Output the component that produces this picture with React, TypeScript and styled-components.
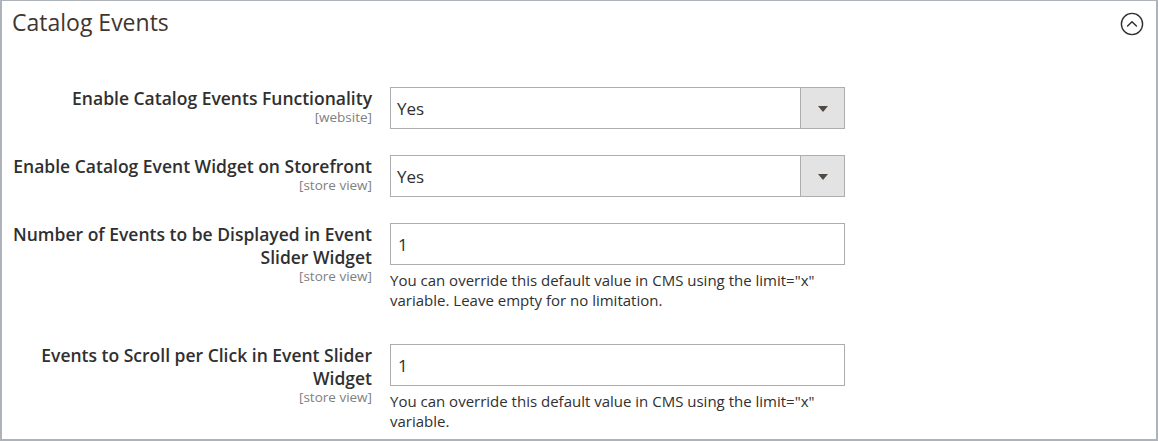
import React from 'react'
import styled, { createGlobalStyle } from 'styled-components'

const GlobalStyle = createGlobalStyle`
  html, body {
    margin: 0;
    padding: 0;
    background: #ffffff;
  }
  body {
    font-family: "Open Sans", "Noto Sans", Arial, sans-serif;
    color: #303030;
  }
`

const Section = styled.section`
  box-sizing: border-box;
  width: 1158px;
  height: 441px;
  overflow: hidden;
  border-top: 1px solid #adb3b8;
  border-right: 2px solid #adb3b8;
  border-bottom: 2px solid #adb3b8;
  border-left: 2px solid #adb3b8;
  background: #ffffff;
`

const Header = styled.div`
  display: flex;
  align-items: flex-start;
  justify-content: space-between;
  padding: 6px 12px 0 10px;
`

const Title = styled.h2`
  margin: 0;
  font-size: 23px;
  line-height: 30px;
  font-weight: 400;
  color: #41362f;
`

const Toggle = styled.button`
  display: flex;
  padding: 0;
  border: 0;
  background: transparent;
  margin-top: 5px;
  cursor: pointer;
`

const Fields = styled.div`
  display: flex;
  flex-direction: column;
  padding: 50px 0 0 10px;
`

const Row = styled.div<{ $spacing: number }>`
  display: grid;
  grid-template-columns: 360px 455px;
  column-gap: 18px;
  margin-bottom: ${(p) => p.$spacing}px;
`

const Label = styled.div`
  text-align: right;
`

const LabelText = styled.div`
  font-size: 17.5px;
  line-height: 23px;
  font-weight: 600;
  color: #303030;
`

const Scope = styled.div`
  font-size: 13.5px;
  line-height: 15px;
  color: #808080;
`

const Control = styled.div`
  display: flex;
  flex-direction: column;
`

const SelectBox = styled.div`
  box-sizing: border-box;
  display: flex;
  height: 42px;
  border: 1px solid #adadad;
  background: #ffffff;
`

const SelectValue = styled.div`
  flex: 1;
  display: flex;
  align-items: center;
  padding-left: 6px;
  font-size: 17px;
  color: #303030;
`

const SelectButton = styled.div`
  width: 43px;
  display: flex;
  align-items: center;
  justify-content: center;
  background: #e3e3e3;
  border-left: 1px solid #adadad;
`

const Arrow = styled.span`
  width: 0;
  height: 0;
  border-left: 5px solid transparent;
  border-right: 5px solid transparent;
  border-top: 6px solid #514943;
  margin-top: 1px;
`

const TextInput = styled.input`
  box-sizing: border-box;
  height: 42px;
  width: 100%;
  border: 1px solid #adadad;
  padding: 0 7px;
  font-family: inherit;
  font-size: 17px;
  color: #303030;
  background: #ffffff;
  outline: none;
`

const Note = styled.div`
  margin-top: 5px;
  font-size: 15px;
  line-height: 20px;
  color: #303030;
`

function ChevronCircle() {
  return (
    <svg width="24" height="24" viewBox="0 0 24 24" fill="none">
      <circle cx="12" cy="12" r="10.6" stroke="#303030" strokeWidth="1.4" />
      <path d="M7.6 14 L12 9.8 L16.4 14" stroke="#303030" strokeWidth="1.5" strokeLinecap="round" strokeLinejoin="round" />
    </svg>
  )
}

const fields = [
  {
    label: 'Enable Catalog Events Functionality',
    scope: '[website]',
    type: 'select',
    value: 'Yes',
    spacing: 26,
  },
  {
    label: 'Enable Catalog Event Widget on Storefront',
    scope: '[store view]',
    type: 'select',
    value: 'Yes',
    spacing: 26,
  },
  {
    label: 'Number of Events to be Displayed in Event Slider Widget',
    scope: '[store view]',
    type: 'text',
    value: '1',
    note: 'You can override this default value in CMS using the limit="x" variable. Leave empty for no limitation.',
    spacing: 34,
  },
  {
    label: 'Events to Scroll per Click in Event Slider Widget',
    scope: '[store view]',
    type: 'text',
    value: '1',
    note: 'You can override this default value in CMS using the limit="x" variable.',
    spacing: 0,
  },
]

export default function App() {
  return (
    <>
      <GlobalStyle />
      <Section>
        <Header>
          <Title>Catalog Events</Title>
          <Toggle aria-label="Collapse">
            <ChevronCircle />
          </Toggle>
        </Header>
        <Fields>
          {fields.map((f) => (
            <Row key={f.label} $spacing={f.spacing}>
              <Label>
                <LabelText>{f.label}</LabelText>
                <Scope>{f.scope}</Scope>
              </Label>
              <Control>
                {f.type === 'select' ? (
                  <SelectBox>
                    <SelectValue>{f.value}</SelectValue>
                    <SelectButton>
                      <Arrow />
                    </SelectButton>
                  </SelectBox>
                ) : (
                  <TextInput defaultValue={f.value} />
                )}
                {f.note && <Note>{f.note}</Note>}
              </Control>
            </Row>
          ))}
        </Fields>
      </Section>
    </>
  )
}
